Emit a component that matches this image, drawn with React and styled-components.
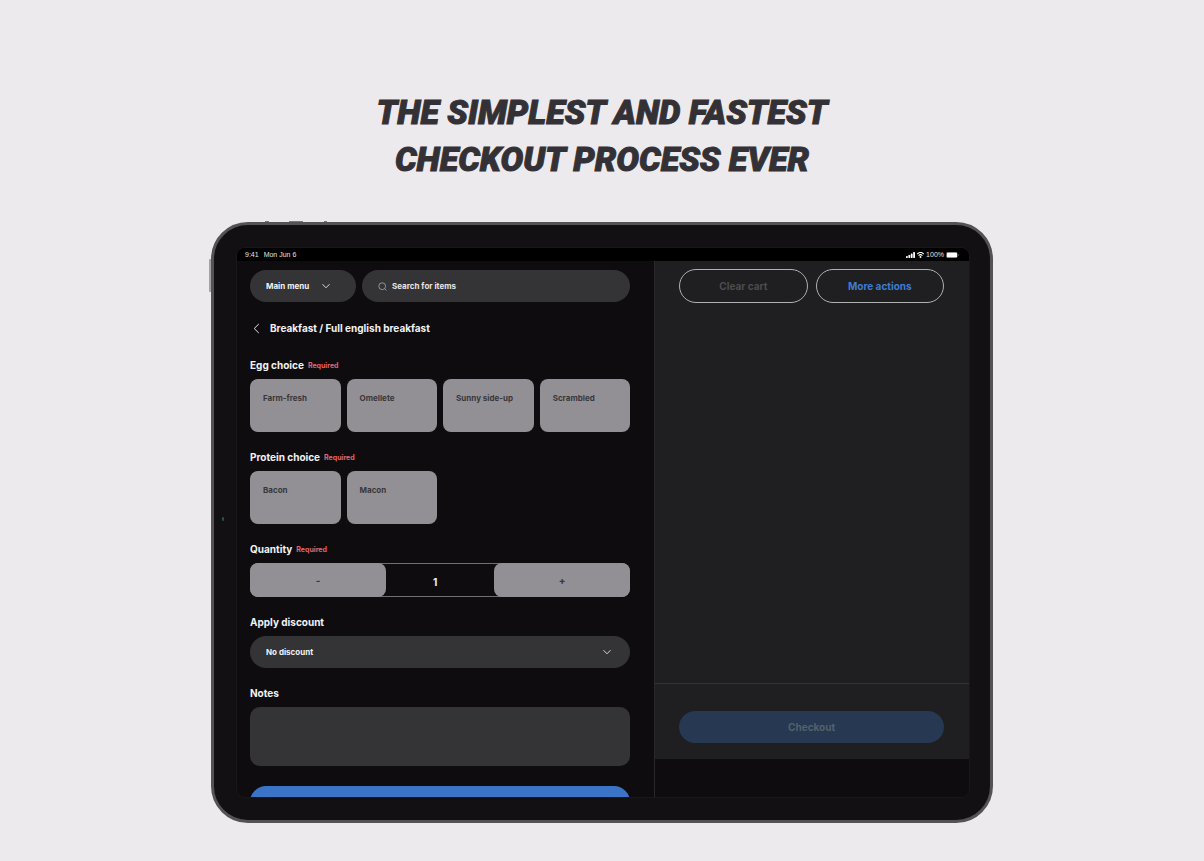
import React, { useState } from 'react';
import styled, { createGlobalStyle } from 'styled-components';

const GlobalStyle = createGlobalStyle`
  * {
    box-sizing: border-box;
  }

  body {
    margin: 0;
    background-color: #eceaed;
    font-family: Inter, sans-serif;
  }

  button, input, select, textarea {
    font-family: inherit;
    margin: 0;
  }
`;

const Page = styled.main`
  display: flex;
  flex-direction: column;
  align-items: center;
  gap: 39px;
  padding: 89px 16px 39px;
`;

const Headline = styled.h1`
  max-width: 480px;
  margin: 0;
  color: #333135;
  font-family: Roboto, sans-serif;
  font-size: 34px;
  font-style: italic;
  font-weight: 900;
  line-height: 47px;
  text-align: center;
  text-transform: uppercase;
  -webkit-text-stroke: 1px #333135;
`;

const Tablet = styled.div`
  position: relative;
  width: 100%;
  max-width: 782px;
  padding: 23px 21px 23px 23px;
  border: 3px solid #535254;
  border-radius: 37px;
  background-color: #121013;
`;

const SideButton = styled.span`
  position: absolute;
  top: 34px;
  left: -5px;
  width: 2px;
  height: 33px;
  border-radius: 1px 0 0 1px;
  background-color: #a3a2a5;
`;

const TopButton = styled.span`
  position: absolute;
  top: -4px;
  left: ${props => props.$left};
  width: ${props => props.$width};
  height: 1px;
  background-color: #77767a;
`;

const Camera = styled.span`
  position: absolute;
  top: 49%;
  left: 8px;
  width: 2px;
  height: 4px;
  border-radius: 1px;
  background-color: #2f4a50;
`;

const Screen = styled.div`
  display: flex;
  flex-direction: column;
  aspect-ratio: 4 / 3;
  overflow: hidden;
  border-radius: 8px;
  background-color: #0e0c0f;
  box-shadow: 0 0 0 1px #19171a;
`;

const StatusBar = styled.div`
  display: flex;
  flex: none;
  align-items: center;
  gap: 5px;
  height: 13px;
  padding: 0 10px 0 8px;
  background-color: #000;
  color: #e4e4e6;
  font-family: 'Liberation Sans', Arial, sans-serif;
  font-size: 7px;
  line-height: 13px;
`;

const StatusIcons = styled.div`
  display: flex;
  align-items: center;
  gap: 2px;
  margin-left: auto;
`;

const Panes = styled.div`
  display: grid;
  flex: 1;
  grid-template-columns: 57fr 43fr;
  min-height: 0;
`;

const ItemPane = styled.section`
  min-width: 0;
  padding: 9px 24px 0 13px;
  overflow: hidden;
`;

const CartPane = styled.aside`
  display: flex;
  flex-direction: column;
  border-left: 1px solid #29282a;
`;

const Toolbar = styled.div`
  display: flex;
  gap: 6px;
`;

const MenuButton = styled.button`
  display: flex;
  align-items: center;
  justify-content: space-between;
  width: 106px;
  height: 32px;
  padding: 0 25px 0 16px;
  border: none;
  border-radius: 16px;
  background-color: #343335;
  color: #f2f2f3;
  font-size: 8px;
  font-weight: 700;
`;

const SearchBox = styled.label`
  display: flex;
  flex: 1;
  align-items: center;
  gap: 5px;
  height: 32px;
  padding: 0 16px;
  border-radius: 16px;
  background-color: #343335;
`;

const SearchInput = styled.input`
  flex: 1;
  min-width: 0;
  padding: 0;
  border: none;
  outline: none;
  background: transparent;
  color: #f2f2f3;
  font-size: 8px;
  font-weight: 700;

  &::placeholder {
    color: #e6e6e8;
    opacity: 1;
  }
`;

const Breadcrumb = styled.a`
  display: flex;
  align-items: center;
  gap: 10px;
  margin: 18px 0 22px;
  padding-left: 3px;
  color: #f2f2f3;
  font-size: 10px;
  font-weight: 700;
  line-height: 16px;
  text-decoration: none;
`;

const Form = styled.form`
  display: flex;
  flex-direction: column;
  gap: 18px;
`;

const Field = styled.div`
  display: flex;
  flex-direction: column;
  gap: 6px;
`;

const FieldLabel = styled.label`
  display: flex;
  align-items: center;
  gap: 4px;
  color: #f2f2f3;
  font-size: 10px;
  font-weight: 700;
  line-height: 15px;
`;

const Required = styled.span`
  color: #e2666d;
  font-size: 7px;
`;

const Options = styled.div`
  display: grid;
  grid-template-columns: repeat(4, 1fr);
  gap: 6px;
`;

const OptionCard = styled.button`
  display: flex;
  align-items: flex-start;
  height: 53px;
  padding: 13px;
  border: none;
  border-radius: 8px;
  background-color: ${props => (props.$selected ? '#b5b3b7' : '#929094')};
  color: #39373b;
  font-size: 8px;
  font-weight: 700;
  line-height: 12px;
  text-align: left;
  white-space: nowrap;
`;

const Stepper = styled.div`
  display: flex;
  height: 34px;
  border: 1px solid #706f72;
  border-radius: 8px;
`;

const StepButton = styled.button`
  flex: none;
  width: 36%;
  margin: -1px;
  padding: 0;
  border: none;
  border-radius: 8px;
  background-color: #929094;
  color: #39373b;
  font-size: 10px;
  font-weight: 700;
`;

const StepValue = styled.input`
  flex: 1;
  min-width: 0;
  padding: 3px 10px 0 0;
  border: none;
  outline: none;
  background: transparent;
  color: #f2f2f3;
  font-size: 10px;
  font-weight: 700;
  text-align: center;
`;

const SelectBox = styled.div`
  display: grid;
  align-items: center;

  > * {
    grid-area: 1 / 1;
  }

  svg {
    justify-self: end;
    margin-right: 18px;
    pointer-events: none;
  }
`;

const Select = styled.select`
  width: 100%;
  height: 32px;
  padding: 0 16px;
  border: none;
  border-radius: 16px;
  appearance: none;
  background-color: #343335;
  color: #f2f2f3;
  font-size: 8px;
  font-weight: 700;
`;

const Notes = styled.textarea`
  display: block;
  width: 100%;
  height: 59px;
  padding: 10px 16px;
  border: none;
  border-radius: 10px;
  resize: none;
  background-color: #343335;
  color: #f2f2f3;
  font-size: 8px;
`;

const AddButton = styled.button`
  height: 32px;
  margin-top: 2px;
  border: none;
  border-radius: 16px;
  background-color: #3b74c6;
`;

const CartBody = styled.div`
  display: flex;
  flex: 1;
  flex-direction: column;
  background-color: #1f1e20;
`;

const CartActions = styled.div`
  display: flex;
  flex: 1;
  align-items: flex-start;
  gap: 8px;
  padding: 8px 25px 0 24px;
`;

const OutlineButton = styled.button`
  flex: 1;
  height: 34px;
  padding: 0;
  border: 1px solid #b0afb1;
  border-radius: 17px;
  background: transparent;
  color: ${props => props.$color};
  font-size: 10px;
  font-weight: 700;
`;

const CartFooter = styled.div`
  display: flex;
  padding: 27px 25px 16px 24px;
  border-top: 1px solid #333234;
`;

const CheckoutButton = styled.button`
  flex: 1;
  height: 32px;
  border: none;
  border-radius: 16px;
  background-color: #263852;
  color: #53616c;
  font-size: 10px;
  font-weight: 700;
`;

const HomeArea = styled.div`
  height: 38px;
`;

const Chevron = () => (
  <svg width="10" height="10" viewBox="0 0 10 10" fill="none" stroke="#d6d6d8" aria-hidden="true">
    <path d="M1.5 3.2L5 6.8l3.5-3.6" />
  </svg>
);

const BackIcon = () => (
  <svg width="7" height="11" viewBox="0 0 7 11" fill="none" stroke="#e6e6e8" aria-hidden="true">
    <path d="M5.8 1L1.2 5.5 5.8 10" />
  </svg>
);

const SearchIcon = () => (
  <svg width="9" height="9" viewBox="0 0 9 9" fill="none" stroke="#a9a9ab" strokeWidth="0.8" aria-hidden="true">
    <circle cx="4.2" cy="4.2" r="3.4" />
    <path d="M6.7 6.7l1.8 1.8" />
  </svg>
);

const SignalIcon = () => (
  <svg width="9" height="6" viewBox="0 0 9 6" fill="#fff" aria-hidden="true">
    <rect x="0" y="4" width="1.8" height="2" rx="0.4" />
    <rect x="2.4" y="3" width="1.8" height="3" rx="0.4" />
    <rect x="4.8" y="1.6" width="1.8" height="4.4" rx="0.4" />
    <rect x="7.2" y="0" width="1.8" height="6" rx="0.4" />
  </svg>
);

const WifiIcon = () => (
  <svg width="7" height="6" viewBox="0 0 7 6" fill="none" stroke="#fff" strokeWidth="1.1" aria-hidden="true">
    <path d="M0.3 2.1C2.2 0.2 4.8 0.2 6.7 2.1" />
    <path d="M1.6 3.6C2.7 2.5 4.3 2.5 5.4 3.6" />
    <circle cx="3.5" cy="5" r="0.4" fill="#fff" />
  </svg>
);

const BatteryIcon = () => (
  <svg width="13" height="6" viewBox="0 0 13 6" aria-hidden="true">
    <rect x="0.2" y="0.2" width="11.4" height="5.6" rx="1.6" fill="none" stroke="#77777a" strokeWidth="0.4" />
    <rect x="0.7" y="0.6" width="10.4" height="4.8" rx="1.2" fill="#fff" />
    <path d="M12.1 2v2c.5-.2.7-.6.7-1s-.2-.8-.7-1z" fill="#77777a" />
  </svg>
);

const choices = [
  { name: 'Egg choice', options: ['Farm-fresh', 'Omellete', 'Sunny side-up', 'Scrambled'] },
  { name: 'Protein choice', options: ['Bacon', 'Macon'] }
];

const App = () => {
  const [selected, setSelected] = useState({});
  const [quantity, setQuantity] = useState(1);

  return (
    <>
      <GlobalStyle />
      <Page>
        <Headline>The simplest and fastest checkout process ever</Headline>

        <Tablet>
          <SideButton />
          <TopButton $left="51px" $width="4px" />
          <TopButton $left="75px" $width="14px" />
          <TopButton $left="110px" $width="3px" />
          <Camera />

          <Screen>
            <StatusBar>
              <span>9:41</span>
              <span>Mon Jun 6</span>
              <StatusIcons>
                <SignalIcon />
                <WifiIcon />
                <span>100%</span>
                <BatteryIcon />
              </StatusIcons>
            </StatusBar>

            <Panes>
              <ItemPane>
                <Toolbar>
                  <MenuButton type="button" aria-haspopup="menu">
                    Main menu
                    <Chevron />
                  </MenuButton>
                  <SearchBox>
                    <SearchIcon />
                    <SearchInput type="text" placeholder="Search for items" aria-label="Search for items" />
                  </SearchBox>
                </Toolbar>

                <Breadcrumb href="#breakfast">
                  <BackIcon />
                  Breakfast / Full english breakfast
                </Breadcrumb>

                <Form onSubmit={e => e.preventDefault()}>
                  {choices.map(choice => (
                    <Field key={choice.name} role="group" aria-label={choice.name}>
                      <FieldLabel as="div">
                        {choice.name}
                        <Required>Required</Required>
                      </FieldLabel>
                      <Options>
                        {choice.options.map(option => (
                          <OptionCard
                            key={option}
                            type="button"
                            $selected={selected[choice.name] === option}
                            onClick={() => setSelected({ ...selected, [choice.name]: option })}
                          >
                            {option}
                          </OptionCard>
                        ))}
                      </Options>
                    </Field>
                  ))}

                  <Field>
                    <FieldLabel htmlFor="quantity">
                      Quantity
                      <Required>Required</Required>
                    </FieldLabel>
                    <Stepper>
                      <StepButton type="button" onClick={() => setQuantity(Math.max(1, quantity - 1))}>
                        -
                      </StepButton>
                      <StepValue
                        id="quantity"
                        type="text"
                        inputMode="numeric"
                        value={quantity}
                        onChange={e => setQuantity(Number(e.target.value) || 1)}
                      />
                      <StepButton type="button" onClick={() => setQuantity(quantity + 1)}>
                        +
                      </StepButton>
                    </Stepper>
                  </Field>

                  <Field>
                    <FieldLabel htmlFor="discount">Apply discount</FieldLabel>
                    <SelectBox>
                      <Select id="discount">
                        <option>No discount</option>
                      </Select>
                      <Chevron />
                    </SelectBox>
                  </Field>

                  <Field>
                    <FieldLabel htmlFor="notes">Notes</FieldLabel>
                    <Notes id="notes" />
                  </Field>

                  <AddButton type="submit" aria-label="Add to cart" />
                </Form>
              </ItemPane>

              <CartPane>
                <CartBody>
                  <CartActions>
                    <OutlineButton type="button" $color="#4d4c4f">Clear cart</OutlineButton>
                    <OutlineButton type="button" $color="#3f7ccf">More actions</OutlineButton>
                  </CartActions>
                  <CartFooter>
                    <CheckoutButton type="button">Checkout</CheckoutButton>
                  </CartFooter>
                </CartBody>
                <HomeArea />
              </CartPane>
            </Panes>
          </Screen>
        </Tablet>
      </Page>
    </>
  );
};

export default App;
